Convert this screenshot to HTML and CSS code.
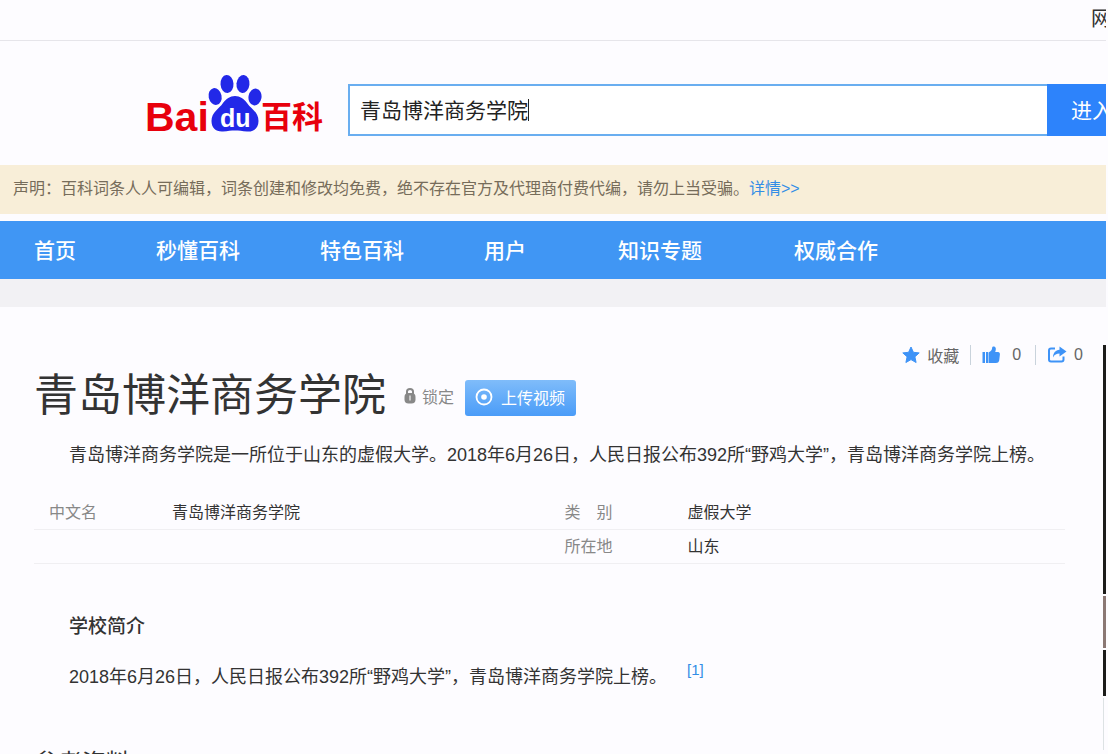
FILE: index.html
```html
<!DOCTYPE html>
<html lang="zh-CN">
<head>
    <meta charset="UTF-8">
    <meta name="viewport" content="width=device-width, initial-scale=1.0">
    <title>青岛博洋商务学院_百度百科</title>
    <link rel="stylesheet" href="styles.css">
</head>
<body>
    <div class="topbar">
        <a href="#">网</a>
    </div>

    <header class="header">
        <a class="logo" href="#" aria-label="Baidu百科">
            <svg width="180" height="62" viewBox="0 0 180 62">
                <g fill="#2228e8">
                    <ellipse cx="81" cy="12" rx="6.500" ry="9" transform="rotate(-4 81 12)"/>
                    <ellipse cx="97" cy="12" rx="6.500" ry="9" transform="rotate(6 97 12)"/>
                    <ellipse cx="69" cy="24.500" rx="6.500" ry="8.500" transform="rotate(-12 69 24)"/>
                    <ellipse cx="109" cy="25" rx="6.500" ry="8.500" transform="rotate(10 109 25)"/>
                    <path d="M89 24C94 24 98 27 101 31C105 37 112.500 40 112.500 49C112.500 56 108 60 101 59.500C96 59 93 58.500 89 58.500C85 58.500 82 59 77 59.500C70 60 65.500 56 65.500 49C65.500 40 73 37 77 31C80 27 84 24 89 24Z"/>
                </g>
                <text class="logo-red" x="-1" y="59" font-size="41">Bai</text>
                <text class="logo-white" x="74" y="55" font-size="25">du</text>
                <text class="logo-red logo-cjk" x="115" y="56" font-size="31">百科</text>
            </svg>
        </a>
        <form class="search">
            <input type="text" value="青岛博洋商务学院" aria-label="搜索词条">
            <span class="caret"></span>
            <button type="button">进入</button>
        </form>
    </header>

    <div class="notice">
        声明：百科词条人人可编辑，词条创建和修改均免费，绝不存在官方及代理商付费代编，请勿上当受骗。<a href="#">详情&gt;&gt;</a>
    </div>

    <nav class="nav">
        <a href="#">首页</a>
        <a href="#">秒懂百科</a>
        <a href="#">特色百科</a>
        <a href="#">用户</a>
        <a class="wide" href="#">知识专题</a>
        <a class="wide" href="#">权威合作</a>
    </nav>

    <div class="main">
        <article class="content">
            <div class="tools">
                <button type="button">
                    <svg width="18" height="18" viewBox="0 0 18 18"><path fill="#3e93f7" stroke="#3e93f7" stroke-linejoin="round" d="M9 1L11.4 6.3L17.2 6.9L12.9 10.8L14.1 16.5L9 13.6L3.9 16.5L5.1 10.8L0.8 6.9L6.6 6.3Z"/></svg>
                    <span>收藏</span>
                </button>
                <button class="like" type="button">
                    <svg width="18" height="18" viewBox="0 0 18 18"><path fill="#3e93f7" d="M0.500 6H3V17H0.500ZM4 6H6V17H4ZM6.500 6.500C9 5 10 4 10.200 1.500C10.300 0 13.500 0 13.800 2.500C13.900 4 13.500 5 13.200 6H16C17.400 6 18 7 17.900 8.500L17.200 14.500C16.900 16.200 15.500 17 14 17H6.500Z"/></svg>
                    <span>0</span>
                </button>
                <button class="share" type="button">
                    <svg width="20" height="18" viewBox="0 0 20 18"><path fill="none" stroke="#3e93f7" stroke-width="2" d="M8 2.500H4Q2 2.500 2 4.500V13.500Q2 15.500 4 15.500H14.500Q16.500 15.500 16.500 13.500V10.500"/><path fill="#3e93f7" d="M12.500 0.500L19.500 5.500L12.500 10.500V7.500C9.500 7.500 7.500 8.500 6 11.500C6 7 8.500 4 12.500 3.700Z"/></svg>
                    <span>0</span>
                </button>
            </div>

            <div class="title">
                <h1>青岛博洋商务学院</h1>
                <span class="lock">
                    <svg width="12" height="18" viewBox="0 0 12 18"><path fill="none" stroke="#888" stroke-width="2" d="M3 8V4.500Q3 2 6 2T9 4.500V8"/><rect x="0.500" y="6" width="11" height="10.500" rx="4" fill="#888"/><path stroke="#ddd" stroke-width="1.500" d="M6 8.500V13.500"/></svg>
                    锁定
                </span>
                <button class="upload" type="button">
                    <svg width="18" height="18" viewBox="0 0 18 18"><circle cx="9" cy="9" r="7.500" fill="none" stroke="#fff" stroke-width="1.800"/><circle cx="9" cy="9" r="2.800" fill="#fff"/></svg>
                    上传视频
                </button>
            </div>

            <p class="para">青岛博洋商务学院是一所位于山东的虚假大学。2018年6月26日，人民日报公布392所“野鸡大学”，青岛博洋商务学院上榜。</p>

            <div class="info">
                <dl>
                    <dt>中文名</dt>
                    <dd>青岛博洋商务学院</dd>
                </dl>
                <dl>
                    <dt class="spread"><span>类</span><span>别</span></dt>
                    <dd>虚假大学</dd>
                </dl>
                <dl></dl>
                <dl>
                    <dt>所在地</dt>
                    <dd>山东</dd>
                </dl>
            </div>

            <h3>学校简介</h3>
            <p class="para">2018年6月26日，人民日报公布392所“野鸡大学”，青岛博洋商务学院上榜。<a class="ref" href="#">[1]</a></p>

            <h2>参考资料</h2>
        </article>

        <aside class="side">
            <div class="side-dark"></div>
            <div class="side-photo"></div>
            <div class="side-foot"></div>
            <div class="side-line"></div>
        </aside>
    </div>
</body>
</html>
```
FILE: styles.css
```css
* {
    box-sizing: border-box;
}
body {
    height: 100vh;
    margin: 0;
    padding: 0 2px 0 0;
    display: flex;
    flex-direction: column;
    overflow: hidden;
    background-color: #fdfcff;
    color: #333;
    font-family: "Liberation Sans", "Noto Sans CJK SC", sans-serif;
    font-size: 16px;
}
a {
    color: #338de6;
    text-decoration: none;
}
button {
    border: none;
    font-family: inherit;
    cursor: pointer;
}
.topbar {
    flex: none;
    height: 41px;
    display: flex;
    justify-content: flex-end;
    overflow: hidden;
    border-bottom: 1px solid #e6e5ea;
}
.topbar a {
    margin-right: -5px;
    color: #333;
    font-size: 20px;
    line-height: 38px;
}
.header {
    flex: none;
    height: 124px;
    padding: 31px 0 0 146px;
    display: flex;
    overflow: hidden;
}
.logo {
    width: 202px;
}
.logo svg {
    display: block;
    overflow: visible;
}
.logo-red {
    fill: #e8000c;
    font-weight: bold;
}
.logo-cjk {
    font-family: "Noto Sans CJK SC", sans-serif;
}
.logo-white {
    fill: #fff;
    font-weight: bold;
}
.search {
    position: relative;
    flex: 1;
    height: 52px;
    margin-top: 12px;
    display: flex;
}
.search input {
    flex: 1;
    min-width: 0;
    padding: 0 10px 3px;
    border: 2px solid #69aef0;
    border-right: none;
    background-color: #fff;
    color: #222;
    font-family: inherit;
    font-size: 21px;
    outline: none;
}
.caret {
    position: absolute;
    left: 180px;
    top: 15px;
    width: 1px;
    height: 22px;
    background-color: #222;
}
.search button {
    width: 90px;
    margin-right: -31px; /* runs past the right edge */
    padding-bottom: 4px;
    background-color: #2d83fb;
    color: #fff;
    font-size: 21px;
}
.notice {
    flex: none;
    height: 49px;
    padding-left: 13px;
    background-color: #f8eed8;
    color: #766c5a;
    line-height: 48px;
    white-space: nowrap;
}
.nav {
    flex: none;
    height: 58px;
    margin-top: 7px;
    padding: 0 0 3px 34px;
    display: flex;
    align-items: center;
    gap: 80px;
    background-color: #4096f4;
}
.nav a {
    color: #fff;
    font-size: 21px;
    font-weight: 500;
}
.nav .wide {
    margin-left: 12px;
}
.main {
    flex: 1;
    min-height: 0;
    border-top: 28px solid #f2f1f4;
    display: flex;
}
.content {
    flex: 1;
    padding: 37px 20px 0 34px;
}
.tools {
    height: 22px;
    display: flex;
    justify-content: flex-end;
    align-items: center;
}
.tools button {
    height: 20px;
    padding: 0 11px;
    display: flex;
    align-items: center;
    gap: 7px;
    background: none;
    border-right: 1px solid #c9d3dc;
    color: #666;
    font-size: 16px;
}
.tools .like {
    padding-right: 14px;
    gap: 12px;
}
.tools .share {
    padding-right: 0;
    border-right: none;
}
.title {
    height: 60px;
    display: flex;
    align-items: center;
}
h1 {
    margin: 0;
    font-size: 44px;
    font-weight: 400;
    line-height: 60px;
}
.lock {
    margin: 0 11px 0 18px;
    display: flex;
    align-items: center;
    gap: 6px;
    color: #888;
}
.upload {
    width: 111px;
    height: 36px;
    margin-top: 4px;
    padding: 0 10px 2px;
    display: flex;
    align-items: center;
    gap: 8px;
    border-radius: 3px;
    background: linear-gradient(#7fbcfa, #4a9cf8);
    color: #fff;
    font-size: 16px;
    white-space: nowrap;
}
.para {
    margin: 13px 0 0;
    padding-left: 35px;
    font-size: 18px;
    line-height: 32px;
    white-space: nowrap;
}
.info {
    margin: 25px 18px 0 0;
    display: grid;
    grid-template-columns: 1fr 1fr;
}
.info dl {
    height: 34px;
    margin: 0;
    padding-left: 15px;
    display: flex;
    border-bottom: 1px solid #f0eff2;
    line-height: 34px;
}
.info dt {
    width: 123px;
    color: #888;
}
.info .spread {
    width: 48px;
    margin-right: 75px;
    display: flex;
    justify-content: space-between;
}
.info dd {
    margin: 0;
}
h3 {
    margin: 47px 0 0;
    padding-left: 35px;
    font-size: 19px;
    font-weight: 500;
    line-height: 32px;
}
h3 + .para {
    margin-top: 18px;
}
.ref {
    margin-left: 20px;
    font-size: 15px;
    vertical-align: 8px;
    line-height: 1;
}
h2 {
    margin: 52px 0 0;
    font-size: 24px;
    font-weight: 400;
    line-height: 36px;
}
.side {
    width: 3px;
    padding-top: 38px;
    display: flex;
    flex-direction: column;
    gap: 2px;
}
.side-dark {
    height: 249px;
    background-color: #1c1c1a;
}
.side-photo {
    height: 52px;
    background-color: #8b7874;
}
.side-foot {
    height: 46px;
    background-color: #1c1c1a;
}
.side-line {
    width: 1px;
    height: 52px;
    background-color: #dde2e4;
}
```
